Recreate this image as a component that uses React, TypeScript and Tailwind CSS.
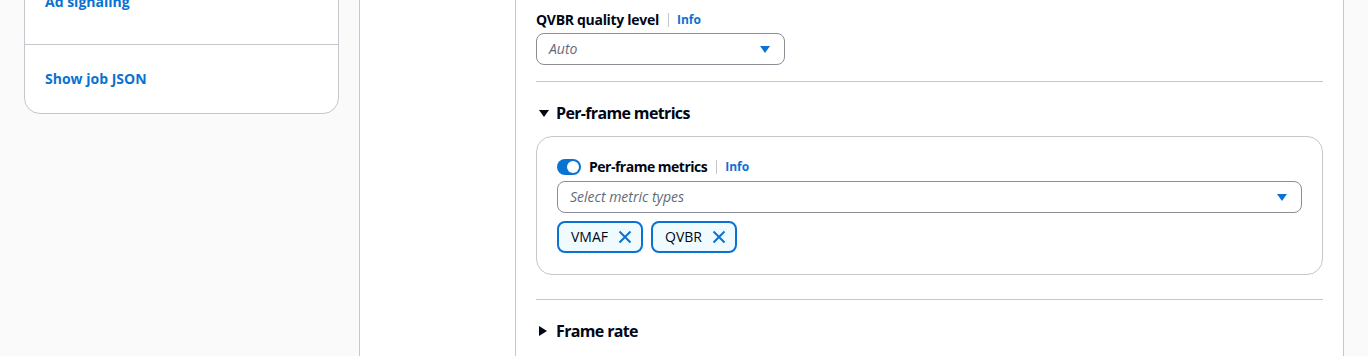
import React from "react";

const Caret = ({ className = "" }: { className?: string }) => (
  <svg width="16" height="16" viewBox="0 0 16 16" className={className}>
    <polygon points="3,5 13,5 8,12" fill="currentColor" />
  </svg>
);

const CaretRight = () => (
  <svg width="16" height="16" viewBox="0 0 16 16">
    <polygon points="3,3 11,8 3,13" fill="currentColor" />
  </svg>
);

const XIcon = () => (
  <svg width="16" height="16" viewBox="0 0 16 16" fill="none">
    <path d="M2.5 2.5l11 11M13.5 2.5l-11 11" stroke="#0972d3" strokeWidth="2" />
  </svg>
);

const Info = () => (
  <>
    <span className="ml-[9px] h-[14px] w-px bg-[#c6c6cd]" />
    <span className="pl-[8px] text-[12px] font-bold leading-[16px] text-[#0972d3]">Info</span>
  </>
);

const Token = ({ label }: { label: string }) => (
  <div className="flex h-[32px] items-center rounded-lg border-2 border-[#0972d3] bg-[#f0fbff] pl-[12px] pr-[8px]">
    <span className="text-[14px] leading-[18px] text-[#000716]">{label}</span>
    <span className="ml-[9px] flex">
      <XIcon />
    </span>
  </div>
);

export default function App() {
  return (
    <div className="flex h-[356px] w-[1368px] overflow-hidden bg-[#fafafa] font-['Open_Sans',sans-serif] text-[#000716]">
      {/* Left navigation column */}
      <div className="w-[360px] shrink-0 border-r border-[#c6c6cd] bg-[#fafafa] pl-6">
        <div className="mt-[-40px] w-[315px] rounded-2xl border border-[#c6c6cd] bg-white">
          <div className="border-b border-[#c6c6cd] px-5 pb-[32px] pt-[31px] text-[14px] font-bold leading-[20px] text-[#0972d3]">
            Ad signaling
          </div>
          <div className="px-5 py-6 text-[14px] font-bold leading-[20px] text-[#0972d3]">
            Show job JSON
          </div>
        </div>
      </div>

      {/* White gap */}
      <div className="w-[155px] shrink-0 bg-white" />

      {/* Main panel */}
      <div className="w-[829px] shrink-0 border-x border-[#c6c6cd] bg-white px-5">
        <div className="mt-[11px] flex h-[18px] items-center">
          <span className="text-[14px] font-bold leading-[18px] tracking-[-0.3px]">QVBR quality level</span>
          <Info />
        </div>
        <div className="mt-[4px] flex h-[32px] w-[249px] items-center justify-between rounded-lg border border-[#8c8c94] pl-3 pr-[11px]">
          <span className="text-[14px] italic leading-[18px] text-[#5f6b7a]">Auto</span>
          <Caret className="text-[#0972d3]" />
        </div>

        <div className="mt-4 h-px bg-[#c6c6cd]" />

        <div className="mt-[20px] flex h-[22px] items-center gap-[4px]">
          <Caret />
          <span className="text-[16px] font-bold leading-[22px] tracking-[-0.65px]">Per-frame metrics</span>
        </div>

        <div className="mt-[12px] rounded-2xl border border-[#c6c6cd] px-5 pb-[21px] pt-[21px]">
          <div className="flex h-[18px] items-center">
            <span className="relative h-4 w-6 rounded-full bg-[#0972d3]">
              <span className="absolute right-[2px] top-[2px] h-3 w-3 rounded-full bg-white" />
            </span>
            <span className="ml-2 text-[14px] font-bold leading-[18px] tracking-[-0.5px]">Per-frame metrics</span>
            <Info />
          </div>
          <div className="mt-[5px] flex h-[32px] items-center justify-between rounded-lg border border-[#8c8c94] pl-3 pr-[11px]">
            <span className="text-[14px] italic leading-[18px] text-[#5f6b7a]">Select metric types</span>
            <Caret className="text-[#0972d3]" />
          </div>
          <div className="mt-2 flex gap-2">
            <Token label="VMAF" />
            <Token label="QVBR" />
          </div>
        </div>

        <div className="mt-6 h-px bg-[#c6c6cd]" />

        <div className="mt-[20px] flex h-[22px] items-center gap-[4px]">
          <CaretRight />
          <span className="text-[16px] font-bold leading-[22px] tracking-[-0.65px]">Frame rate</span>
        </div>
      </div>

      <div className="flex-1 bg-[#fafafa]" />
    </div>
  );
}
